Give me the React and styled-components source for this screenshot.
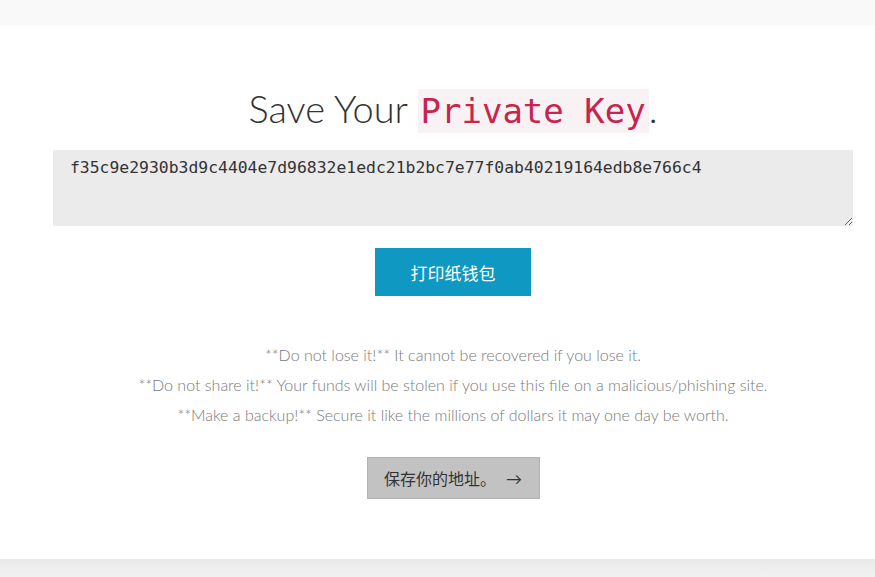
import React from "react";
import styled, { createGlobalStyle } from "styled-components";

const Global = createGlobalStyle`
  html, body { margin: 0; padding: 0; background: #fff; }
  body { font-family: Lato, "Noto Sans CJK SC", sans-serif; color: #333; }
`;

const TopBar = styled.div`
  height: 25px;
  background: #f9f9f9;
`;

const Section = styled.section`
  background: #fff;
  height: 534px;
  box-sizing: border-box;
  padding: 58px 22px 0 53px;
  display: flex;
  flex-direction: column;
  align-items: center;
`;

const Title = styled.h1`
  margin: 0 0 14px;
  font-family: Lato, sans-serif;
  font-weight: 300;
  font-size: 38px;
  line-height: 50px;
  color: #333;
  text-align: center;
`;

const Code = styled.code`
  font-family: "DejaVu Sans Mono", monospace;
  font-size: 34px;
  color: #c7254e;
  background: #f9f2f4;
  padding: 2px 3px;
`;

const KeyArea = styled.textarea`
  width: 800px;
  height: 76px;
  box-sizing: border-box;
  border: none;
  background: #ebebeb;
  padding: 7px 17px;
  font-family: "DejaVu Sans Mono", monospace;
  font-size: 16.4px;
  line-height: 1.3;
  color: #333;
  outline: none;
  display: block;
`;

const Button = styled.button`
  margin-top: ${(p) => p.$mt}px;
  width: ${(p) => p.$w}px;
  height: ${(p) => p.$h}px;
  box-sizing: border-box;
  border: ${(p) => (p.$primary ? "none" : "1px solid #b3b3b3")};
  background: ${(p) => (p.$primary ? "#0f98c1" : "#c2c2c2")};
  color: ${(p) => (p.$primary ? "#fff" : "#333")};
  font-family: Lato, "Noto Sans CJK SC", sans-serif;
  font-size: ${(p) => p.$fs}px;
  display: flex;
  align-items: center;
  justify-content: center;
  gap: 10px;
  padding: 0;
  cursor: pointer;
`;

const Warnings = styled.div`
  margin-top: 44px;
  display: flex;
  flex-direction: column;
  align-items: center;
`;

const Warning = styled.p`
  margin: 0;
  font-family: Lato, sans-serif;
  font-weight: 300;
  font-size: 16px;
  line-height: 30px;
  color: #7a7a7a;
  text-align: center;
`;

const BottomBar = styled.div`
  height: 18px;
  background: linear-gradient(#e9e9e9, #f1f1f1);
`;

export default function App() {
  return (
    <>
      <Global />
      <TopBar />
      <Section>
        <Title>
          Save Your <Code>Private Key</Code>.
        </Title>
        <KeyArea
          readOnly
          defaultValue="f35c9e2930b3d9c4404e7d96832e1edc21b2bc7e77f0ab40219164edb8e766c4"
        />
        <Button $primary $mt={22} $w={156} $h={48} $fs={17}>
          打印纸钱包
        </Button>
        <Warnings>
          <Warning>**Do not lose it!** It cannot be recovered if you lose it.</Warning>
          <Warning>
            **Do not share it!** Your funds will be stolen if you use this file on a
            malicious/phishing site.
          </Warning>
          <Warning>
            **Make a backup!** Secure it like the millions of dollars it may one day be
            worth.
          </Warning>
        </Warnings>
        <Button $mt={27} $w={173} $h={42} $fs={16}>
          <span>保存你的地址。</span>
          <span>→</span>
        </Button>
      </Section>
      <BottomBar />
    </>
  );
}
